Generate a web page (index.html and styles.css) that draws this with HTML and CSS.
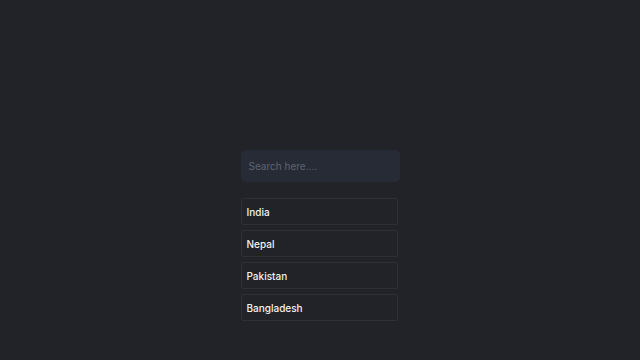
FILE: index.html
```html
<!DOCTYPE html>
<html>
<head>
<meta charset="utf-8">
<link rel="stylesheet" href="styles.css">
</head>
<body>
<div class="wrap">
  <input class="search" type="text" placeholder="Search here....">
  <ul class="list">
    <li class="item">India</li>
    <li class="item">Nepal</li>
    <li class="item">Pakistan</li>
    <li class="item">Bangladesh</li>
  </ul>
</div>
</body>
</html>
```
FILE: styles.css
```css
html, body {
  margin: 0;
  padding: 0;
  background: #222328;
  height: 100%;
}
body {
  font-family: "Inter", "Noto Sans", sans-serif;
}
.wrap {
  width: 159px;
  margin: 0 auto;
  padding-top: 150px;
}
.search {
  display: block;
  box-sizing: border-box;
  width: 159px;
  height: 32px;
  border: none;
  outline: none;
  border-radius: 5px;
  background: #272b35;
  padding: 0 8px;
  font-family: inherit;
  font-size: 10px;
  color: #ddd;
}
.search::placeholder {
  color: #5d6472;
}
.list {
  list-style: none;
  margin: 16px 0 0;
  padding: 0;
  display: flex;
  flex-direction: column;
  gap: 5px;
  width: 157px;
}
.item {
  box-sizing: border-box;
  height: 27px;
  border: 1px solid #2e3036;
  border-radius: 2px;
  padding: 0 5px;
  display: flex;
  align-items: center;
  color: #f2f2f2;
  font-size: 10px;
  font-weight: 500;
}
```
